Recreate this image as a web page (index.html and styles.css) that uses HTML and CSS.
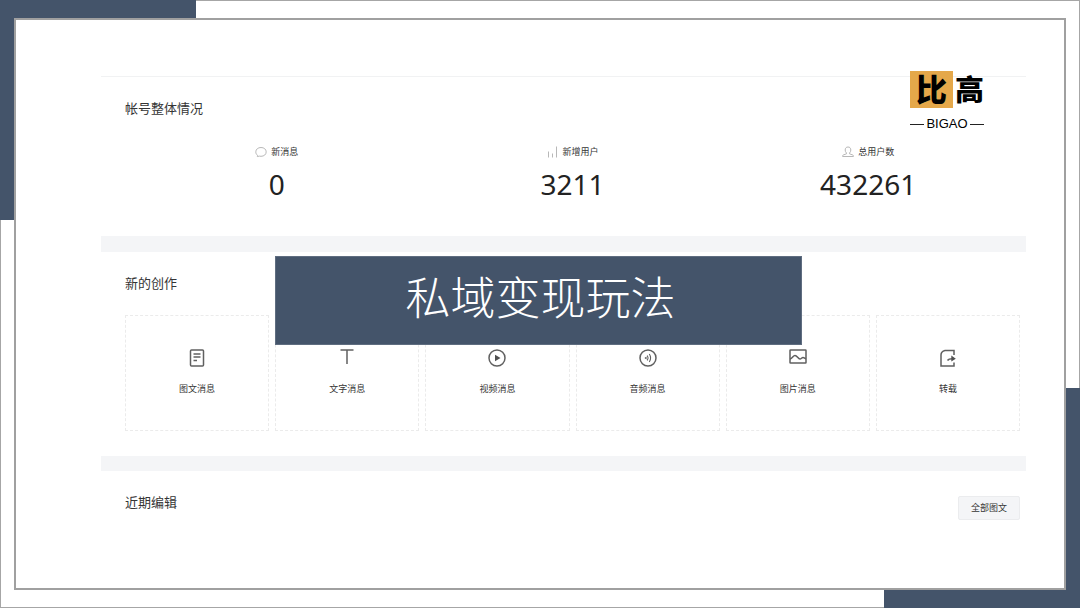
FILE: index.html
```html
<!DOCTYPE html>
<html lang="zh-CN">
<head>
<meta charset="utf-8">
<meta name="viewport" content="width=device-width, initial-scale=1">
<title>私域变现玩法</title>
<link rel="stylesheet" href="styles.css">
</head>
<body>
<div class="slide">
  <div class="corner corner-start"></div>
  <div class="corner corner-end"></div>
  <div class="frame">
    <main class="panel">
      <section class="section overview">
        <h2 class="title">帐号整体情况</h2>
        <div class="stats">
          <div class="stat">
            <div class="stat-label">
              <svg class="stat-icon" viewBox="0 0 12 12"><path d="M2.500 9.300C1.400 8.500.8 7.300.8 5.900.8 3.300 3 1.500 6 1.500s5.200 1.800 5.200 4.400S9 10.300 6 10.300c-.6 0-1.200-.1-1.700-.2L2.300 10.600z"/></svg>
              <span>新消息</span>
            </div>
            <div class="stat-value">0</div>
          </div>
          <div class="stat">
            <div class="stat-label">
              <svg class="stat-icon" viewBox="0 0 12 12"><path d="M2.500 5.500V11.500M6.500 7.500V11.500M10.500 .5V11.500"/></svg>
              <span>新增用户</span>
            </div>
            <div class="stat-value">3211</div>
          </div>
          <div class="stat">
            <div class="stat-label">
              <svg class="stat-icon" viewBox="0 0 12 12"><path d="M4.500 7C3.600 6.200 3.200 5.200 3.200 4 3.200 2.200 4.200 1 6 1s2.800 1.200 2.800 3c0 1.200-.4 2.200-1.300 3v.8l3.300 1.200c.4.200.6.500.6 1v.5H.6V10c0-.5.2-.8.6-1l3.300-1.200z"/></svg>
              <span>总用户数</span>
            </div>
            <div class="stat-value">432261</div>
          </div>
        </div>
      </section>

      <section class="section create">
        <h2 class="title">新的创作</h2>
        <div class="cards">
          <button class="card" type="button">
            <svg class="card-icon" viewBox="0 0 20 20"><rect x="3.500" y="2" width="13" height="16" rx="1"/><path d="M6.500 6h7M6.500 9h7M6.500 12.500h3.500"/></svg>
            <span>图文消息</span>
          </button>
          <button class="card" type="button">
            <svg class="card-icon" viewBox="0 0 20 20"><path d="M3.500 2h13M10 2v14"/></svg>
            <span>文字消息</span>
          </button>
          <button class="card" type="button">
            <svg class="card-icon" viewBox="0 0 20 20"><circle cx="10" cy="10" r="8"/><path class="solid" d="M8 6.800l5.500 3.200-5.500 3.200z"/></svg>
            <span>视频消息</span>
          </button>
          <button class="card" type="button">
            <svg class="card-icon" viewBox="0 0 20 20"><circle cx="10" cy="10" r="8"/><path class="solid" d="M6.500 10l2-1.500v3z"/><path class="thin" d="M9.300 7.500q1.600 2.500 0 5M11.300 6q2.600 4 0 8"/></svg>
            <span>音频消息</span>
          </button>
          <button class="card" type="button">
            <svg class="card-icon" viewBox="0 0 20 20"><rect x="2" y="2" width="16" height="13" rx=".5"/><path d="M2 11c2.500-.5 3-3.500 5-3.500 2.200 0 3 3.500 5 3.500 1.300 0 1.700-1.500 3-1.500s1.700 1 3 1.300"/></svg>
            <span>图片消息</span>
          </button>
          <button class="card" type="button">
            <svg class="card-icon" viewBox="0 0 20 20"><path d="M16 7V2.500H7Q3 3.500 3 7V18h13v-3.500"/><path d="M9.500 12.500c1-1.600 2.500-1.800 5-1.800"/><path class="solid" d="M13.300 7.600l4.500 3.200-4.500 2.600z"/></svg>
            <span>转载</span>
          </button>
        </div>
      </section>

      <section class="section recent">
        <h2 class="title">近期编辑</h2>
        <button class="all-button" type="button">全部图文</button>
      </section>
    </main>
  </div>

  <div class="logo">
    <div class="logo-name"><span class="logo-tile">比</span><span class="logo-word">高</span></div>
    <div class="logo-latin">BIGAO</div>
  </div>

  <h1 class="banner">私域变现玩法</h1>
</div>
</body>
</html>
```
FILE: styles.css
```css
* {
  box-sizing: border-box;
}

body {
  margin: 0;
  background: #fff;
  color: #353535;
  font-family: "Noto Sans", "Noto Sans CJK SC", sans-serif;
}

h1,
h2 {
  margin: 0;
  font-weight: 400;
}

button {
  font: inherit;
  color: inherit;
  cursor: pointer;
}

.slide {
  position: relative;
  display: flex;
  min-height: 100vh;
  padding: 17px 13px;
  border: 1px solid #a6a6a6;
}

.corner {
  position: absolute;
  width: 196px;
  height: 220px;
  background: #44546a;
}

.corner-start {
  top: -1px;
  left: -1px;
}

.corner-end {
  right: -1px;
  bottom: -1px;
}

.frame {
  position: relative;
  flex: 1;
  padding: 56px 38px 24px 85px;
  border: 2px solid #a0a0a0;
  background: #fff;
}

.section {
  padding: 21px 6px 0 24px;
}

.title {
  font-size: 13px;
  line-height: 20px;
}

.overview {
  padding-bottom: 35px;
  border-top: 1px solid #f1f2f3;
  border-bottom: 16px solid #f4f5f7;
}

.stats {
  display: grid;
  grid-template-columns: repeat(3, 1fr);
  margin-top: 27px;
  padding: 0 4px;
}

.stat {
  display: flex;
  flex-direction: column;
  align-items: center;
  gap: 8px;
}

.stat-label {
  display: flex;
  align-items: center;
  gap: 4px;
  font-size: 9px;
  line-height: 14px;
}

.stat-icon {
  width: 12px;
  height: 12px;
  fill: none;
  stroke: #b8b8b8;
  stroke-width: 1;
}

.stat-value {
  color: #222;
  font-size: 28px;
  line-height: 34px;
}

.create {
  padding-bottom: 25px;
  border-bottom: 15px solid #f4f5f7;
}

.cards {
  display: grid;
  grid-template-columns: repeat(6, 1fr);
  gap: 6px;
  margin-top: 22px;
}

.card {
  display: flex;
  flex-direction: column;
  align-items: center;
  gap: 14px;
  padding: 32px 4px 34px;
  border: 1px dashed #ebebeb;
  background: #fff;
  font-size: 9px;
  line-height: 14px;
}

.card-icon {
  width: 20px;
  height: 20px;
  fill: none;
  stroke: #606060;
  stroke-width: 1.5;
}

.card-icon .solid {
  fill: #505050;
  stroke: none;
}

.card-icon .thin {
  stroke-width: 1.1;
}

.recent {
  display: flex;
  justify-content: space-between;
  align-items: flex-start;
}

.all-button {
  margin-top: 4px;
  padding: 4px 12px;
  border: 1px solid #ebecee;
  border-radius: 2px;
  background: #f4f5f7;
  font-size: 9px;
  line-height: 14px;
}

.logo {
  position: absolute;
  top: 70px;
  right: 95px;
  width: 74px;
  color: #000;
}

.logo-name {
  display: flex;
  justify-content: space-between;
  align-items: center;
  font-weight: 900;
}

.logo-tile {
  width: 43px;
  background: #e5a84a;
  font-size: 31px;
  line-height: 37px;
  text-align: center;
}

.logo-word {
  font-size: 29px;
  line-height: 37px;
}

.logo-latin {
  display: flex;
  align-items: center;
  gap: 2px;
  margin-top: 8px;
  font-family: "Liberation Sans", Arial, sans-serif;
  font-size: 13px;
  line-height: 16px;
}

.logo-latin::before,
.logo-latin::after {
  content: "";
  flex: 1;
  height: 1px;
  background: #222;
}

.banner {
  position: absolute;
  top: 255px;
  right: 277px;
  left: 274px;
  padding: 7px 0 17px 4px;
  border: 1px solid #5f6d80;
  background: #44546a;
  color: #fff;
  font-family: "Noto Sans CJK SC", sans-serif;
  font-size: 45px;
  font-weight: 300;
  line-height: 63px;
  text-align: center;
}
```
